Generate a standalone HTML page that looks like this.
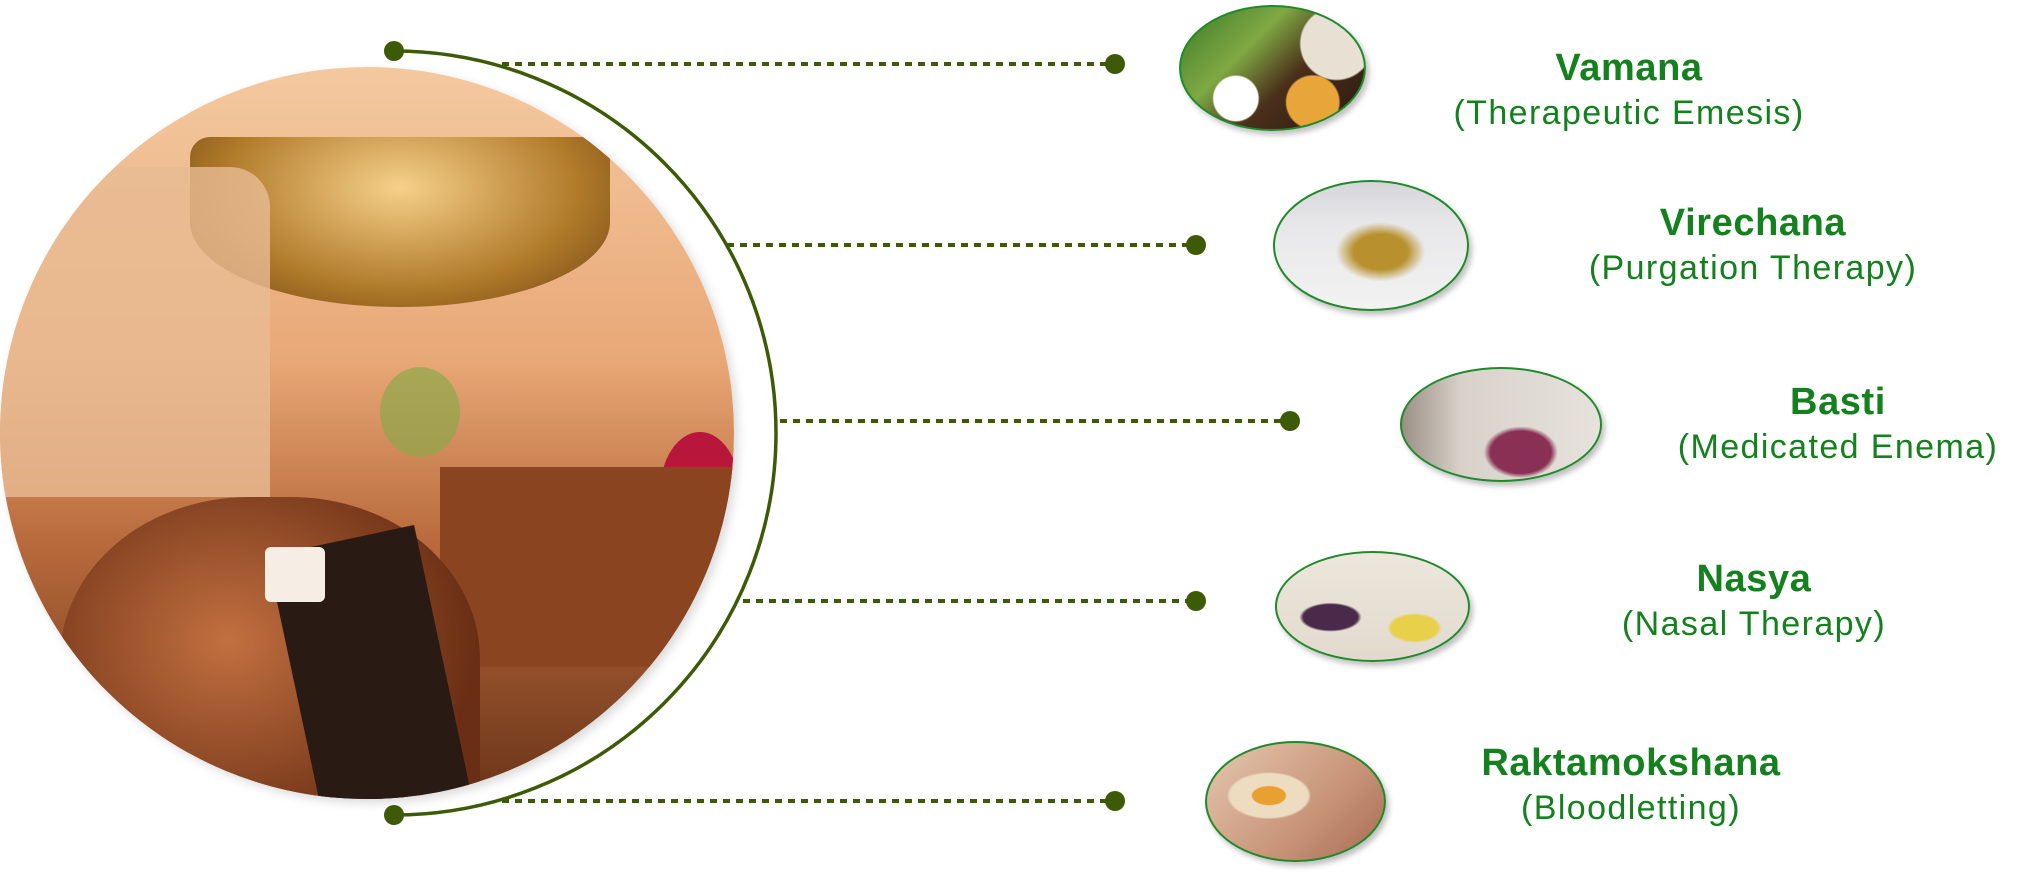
<!DOCTYPE html>
<html><head><meta charset="utf-8"><style>
body{margin:0;width:2018px;height:874px;background:#fff;position:relative;overflow:hidden;font-family:"Liberation Sans",sans-serif}
.ab{position:absolute}
.photo{left:0;top:67px;width:734px;height:732px;border-radius:50%;overflow:hidden;
background:linear-gradient(180deg,#f4c9a0 0%,#e9a877 40%,#b86a3c 65%,#6a3418 100%);box-shadow:4px 4px 10px rgba(0,0,0,.15)}
.th{position:absolute;border:2.5px solid #1f8a2a;border-radius:50%;overflow:hidden;box-shadow:3px 4px 6px rgba(0,0,0,.25)}
.t{position:absolute;text-align:center;color:#14801e;transform:translateX(-50%);white-space:nowrap}
.t b{display:block;font-size:38px;letter-spacing:.6px;line-height:44px}
.t span{display:block;font-size:34px;letter-spacing:1.4px;line-height:46px}
</style></head><body>
<div class="ab photo">
 <div class="ab" style="left:190px;top:70px;width:420px;height:170px;border-radius:20px 20px 50% 50%;background:radial-gradient(ellipse at 50% 30%,#f6d08a,#b07a2a 60%,#6a4212)"></div>
 <div class="ab" style="left:0;top:100px;width:270px;height:330px;background:#e8bb94;opacity:.8;border-radius:0 40px 0 0"></div>
 <div class="ab" style="left:660px;top:365px;width:80px;height:120px;border-radius:50%;background:#b8163a"></div>
 <div class="ab" style="left:380px;top:300px;width:80px;height:90px;border-radius:50%;background:#8da84a;opacity:.7"></div>
 <div class="ab" style="left:440px;top:400px;width:300px;height:200px;background:#8a4420"></div>
 <div class="ab" style="left:60px;top:430px;width:420px;height:360px;border-radius:45% 45% 0 0;background:radial-gradient(ellipse at 40% 40%,#c27040,#6a2e14 70%)"></div>
 <div class="ab" style="left:300px;top:470px;width:150px;height:330px;background:#2a1a14;transform:rotate(-12deg)"></div>
 <div class="ab" style="left:265px;top:480px;width:60px;height:55px;background:#f6eee4;border-radius:6px"></div>
</div>
<svg class="ab" style="left:0;top:0" width="1400" height="874">
 <path d="M394 51 A382 382 0 0 1 394 815" fill="none" stroke="#3d5a06" stroke-width="3.5"/>
 <g stroke="#3d5a06" stroke-width="4" stroke-dasharray="7 6">
  <line x1="502" y1="64" x2="1112" y2="64"/>
  <line x1="727" y1="245" x2="1193" y2="245"/>
  <line x1="780" y1="421" x2="1287" y2="421"/>
  <line x1="743" y1="601" x2="1193" y2="601"/>
  <line x1="502" y1="801" x2="1112" y2="801"/>
 </g>
 <g fill="#3d5a06">
  <circle cx="394" cy="51" r="10"/><circle cx="394" cy="815" r="10"/>
  <circle cx="1115" cy="64" r="10"/><circle cx="1196" cy="245" r="10"/>
  <circle cx="1290" cy="421" r="10"/><circle cx="1196" cy="601" r="10"/>
  <circle cx="1115" cy="801" r="10"/>
 </g>
</svg>
<div class="th" style="left:1179px;top:5px;width:183px;height:122px;background:radial-gradient(circle at 30% 75%,#fff 0 14%,transparent 15%),radial-gradient(circle at 72% 78%,#e7a53a 0 16%,transparent 17%),radial-gradient(circle at 85% 30%,#e8e0d2 0 20%,transparent 21%),linear-gradient(135deg,#3c7a2a 0%,#7fa843 35%,#4a2e1a 60%,#2a1a10 100%)"></div>
<div class="th" style="left:1273px;top:180px;width:192px;height:127px;background:radial-gradient(ellipse at 55% 55%,#b8912e 0 18%,transparent 30%),linear-gradient(180deg,#d6d6da 0%,#e8e8ea 35%,#f2f2f2 100%)"></div>
<div class="th" style="left:1400px;top:367px;width:198px;height:111px;background:radial-gradient(ellipse at 60% 75%,#8a3054 0 18%,transparent 22%),linear-gradient(90deg,#9a8f84 0%,#d8d2ca 30%,#e6e2dc 100%)"></div>
<div class="th" style="left:1275px;top:551px;width:191px;height:107px;background:radial-gradient(ellipse at 28% 60%,#4a2a4a 0 14%,transparent 16%),radial-gradient(ellipse at 72% 70%,#e8d04a 0 12%,transparent 14%),linear-gradient(180deg,#ece6dc,#e2dacd)"></div>
<div class="th" style="left:1205px;top:741px;width:177px;height:117px;background:radial-gradient(ellipse at 35% 45%,#e8a030 0 10%,#eedcc0 11% 24%,transparent 26%),linear-gradient(135deg,#e4c8b0,#c89478 60%,#a86c54)"></div>
<div class="t" style="left:1629px;top:46px"><b>Vamana</b><span>(Therapeutic Emesis)</span></div>
<div class="t" style="left:1753px;top:201px"><b>Virechana</b><span>(Purgation Therapy)</span></div>
<div class="t" style="left:1838px;top:380px"><b>Basti</b><span>(Medicated Enema)</span></div>
<div class="t" style="left:1754px;top:557px"><b>Nasya</b><span>(Nasal Therapy)</span></div>
<div class="t" style="left:1631px;top:741px"><b>Raktamokshana</b><span>(Bloodletting)</span></div>
</body></html>
